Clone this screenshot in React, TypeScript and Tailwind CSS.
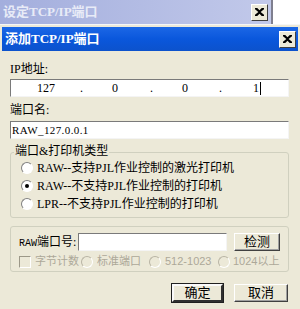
const FONT = "font-['SimSun','Liberation_Serif','Noto_Sans_CJK_SC',serif]";

function CloseBox({ className }: { className?: string }) {
  return (
    <div
      className={`flex h-[17px] w-[17px] items-center justify-center border border-t-white border-l-white border-r-[#404040] border-b-[#404040] bg-[#ece9d8] ${className ?? ""}`}
    >
      <svg viewBox="0 0 8 7" className="h-[8px] w-[9px]">
        <path d="M0 0h2l2 2 2-2h2v1L5 3.5 8 6v1H6L4 5 2 7H0V6l3-2.5L0 1z" fill="#000" />
      </svg>
    </div>
  );
}

function Radio({ checked, disabled }: { checked?: boolean; disabled?: boolean }) {
  return (
    <span
      className={`relative inline-flex h-[12px] w-[12px] shrink-0 items-center justify-center rounded-full border ${
        disabled ? "border-t-[#b8b4a4] border-l-[#b8b4a4] border-r-white border-b-white bg-[#ece9d8]" : "border-t-[#808080] border-l-[#808080] border-r-white border-b-white bg-white"
      }`}
    >
      {checked && <span className="h-[4px] w-[4px] rounded-full bg-black" />}
    </span>
  );
}

function Sunken({ className, children }: { className?: string; children?: React.ReactNode }) {
  return (
    <div className={`border border-t-[#7a7a7a] border-l-[#7a7a7a] border-r-[#f4f4f4] border-b-[#f4f4f4] bg-white ${className ?? ""}`}>
      {children}
    </div>
  );
}

function Button({ label, def }: { label: string; def?: boolean }) {
  return (
    <div
      className={`flex h-[18px] items-center justify-center bg-[#ece9d8] text-[13px] text-black ${
        def
          ? "border-2 border-t-[#fafafa] border-l-[#fafafa] border-r-[#303030] border-b-[#303030] outline outline-1 outline-[#202020]"
          : "border border-t-white border-l-white border-r-[#404040] border-b-[#404040] shadow-[inset_-1px_-1px_0_#a0a0a0]"
      }`}
    >
      {label}
    </div>
  );
}

export default function App() {
  return (
    <div className={`relative h-[309px] w-[300px] overflow-hidden bg-white ${FONT} text-[12px] text-black`}>
      {/* back window title */}
      <div className="flex h-[24px] w-[273px] items-center justify-between border-r-2 border-[#7f7f8f] bg-gradient-to-r from-[#a3aedd] to-[#c2c9ea] pl-[3px] pr-[3px]">
        <span className="text-[13px] font-bold text-[#e8ebf7]">设定TCP/IP端口</span>
        <CloseBox />
      </div>

      {/* front dialog */}
      <div className="h-[285px] border-t border-[#f6f6f6] bg-[#ece9d8] pt-[2px]">
        <div className="mx-[2px] flex h-[24px] items-center justify-between bg-gradient-to-b from-[#1b67e6] via-[#0a57dc] to-[#0c52cc] pl-[3px] pr-[2px]">
          <span className="text-[13px] font-bold text-white">添加TCP/IP端口</span>
          <CloseBox />
        </div>

        <div className="pl-[10px] pr-[11px] whitespace-nowrap">
          <div className="mt-[11px] leading-[14px]">IP地址:</div>
          <Sunken className="mt-[3px] flex h-[18px] items-center text-[12px]">
            <span className="w-[44px] text-right">127</span>
            <span className="w-[28px] text-right">.</span>
            <span className="w-[35px] text-right">0</span>
            <span className="w-[35px] text-right">.</span>
            <span className="w-[35px] text-right">0</span>
            <span className="w-[34px] text-right">.</span>
            <span className="w-[37px] text-right">1</span>
            <span className="ml-[1px] h-[13px] w-[1px] bg-black" />
          </Sunken>

          <div className="mt-[6px] leading-[14px]">端口名:</div>
          <Sunken className="mt-[4px] flex h-[18px] items-center pl-[1px] text-[11px] tracking-[0.4px]">
            RAW_127.0.0.1
          </Sunken>

          {/* group 1 */}
          <div className="relative mt-[13px] h-[66px] rounded-[3px] border border-[#d0d0bf]">
            <span className="absolute left-[3px] top-[-9px] bg-[#ece9d8] px-[1px] text-[12px] leading-[14px]">端口&amp;打印机类型</span>
            <div className="flex flex-col gap-[5px] pl-[10px] pt-[8px]">
              <div className="flex h-[13px] items-center gap-[4px]">
                <Radio />
                <span className="text-[12px]">RAW--支持PJL作业控制的激光打印机</span>
              </div>
              <div className="flex h-[13px] items-center gap-[4px]">
                <Radio checked />
                <span className="text-[12px]">RAW--不支持PJL作业控制的打印机</span>
              </div>
              <div className="flex h-[13px] items-center gap-[4px]">
                <Radio />
                <span className="text-[12px]">LPR--不支持PJL作业控制的打印机</span>
              </div>
            </div>
          </div>

          {/* group 2 */}
          <div className="mt-[8px] h-[46px] rounded-[3px] border border-[#d0d0bf] pl-[8px] pr-[8px] pt-[6px]">
            <div className="flex items-center">
              <span className="flex w-[59px] items-baseline text-[12px]">
                <span className="font-['Liberation_Mono',monospace] text-[10px]">RAW</span>
                <span>端口号:</span>
              </span>
              <Sunken className="h-[18px] w-[149px]" />
              <div className="ml-[7px] w-[46px]">
                <Button label="检测" />
              </div>
            </div>
            <div className="mt-[4px] flex h-[13px] items-center text-[11px] leading-[13px] text-[#aca899] font-['Liberation_Sans','Noto_Sans_CJK_SC',sans-serif]">
              <span className="h-[12px] w-[12px] shrink-0 border border-t-[#9c9888] border-l-[#9c9888] border-r-white border-b-white" />
              <span className="ml-[4px] w-[46px]">字节计数</span>
              <Radio disabled />
              <span className="ml-[4px] w-[52px]">标准端口</span>
              <Radio disabled />
              <span className="ml-[4px] w-[53px]">512-1023</span>
              <Radio disabled />
              <span className="ml-[3px]">1024以上</span>
            </div>
          </div>

          <div className="mt-[12px] flex justify-end gap-[11px] pr-[1px]">
            <div className="w-[51px]">
              <Button label="确定" def />
            </div>
            <div className="w-[54px]">
              <Button label="取消" />
            </div>
          </div>
        </div>
      </div>
    </div>
  );
}
